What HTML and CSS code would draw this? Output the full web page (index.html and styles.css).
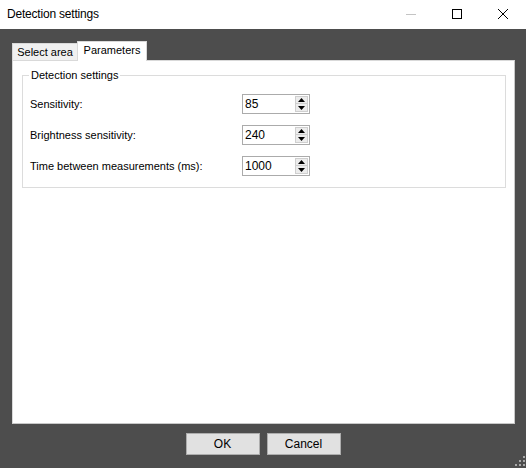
FILE: index.html
```html
<!DOCTYPE html>
<html>
<head>
<meta charset="utf-8">
<link rel="stylesheet" href="styles.css">
</head>
<body>
<div class="window">
  <div class="titlebar">
    <div class="title">Detection settings</div>
    <div class="caption-buttons">
      <div class="cap-btn"><svg width="12" height="12" viewBox="0 0 12 12"><line x1="1" y1="6.5" x2="11" y2="6.5" stroke="#c4c4c4" stroke-width="1"/></svg></div>
      <div class="cap-btn"><svg width="12" height="12" viewBox="0 0 12 12"><rect x="1.5" y="1.5" width="9" height="9" fill="none" stroke="#000" stroke-width="1"/></svg></div>
      <div class="cap-btn"><svg width="12" height="12" viewBox="0 0 12 12"><path d="M1 1 L11 11 M11 1 L1 11" stroke="#000" stroke-width="1"/></svg></div>
    </div>
  </div>
  <div class="client">
    <div class="tabstrip">
      <div class="tab">Select area</div>
      <div class="tab active">Parameters</div>
    </div>
    <div class="panel">
      <div class="group">
        <span class="legend">Detection settings</span>
        <div class="rows">
          <div class="label">Sensitivity:</div>
          <div class="spin"><span class="val">85</span><div class="spin-btns"><div class="sb"><svg width="7" height="4" viewBox="0 0 7 4"><path d="M3.5 0 L7 4 L0 4 Z" fill="#000"/></svg></div><div class="sb"><svg width="7" height="4" viewBox="0 0 7 4"><path d="M0 0 L7 0 L3.5 4 Z" fill="#000"/></svg></div></div></div>
          <div class="label">Brightness sensitivity:</div>
          <div class="spin"><span class="val">240</span><div class="spin-btns"><div class="sb"><svg width="7" height="4" viewBox="0 0 7 4"><path d="M3.5 0 L7 4 L0 4 Z" fill="#000"/></svg></div><div class="sb"><svg width="7" height="4" viewBox="0 0 7 4"><path d="M0 0 L7 0 L3.5 4 Z" fill="#000"/></svg></div></div></div>
          <div class="label">Time between measurements (ms):</div>
          <div class="spin"><span class="val">1000</span><div class="spin-btns"><div class="sb"><svg width="7" height="4" viewBox="0 0 7 4"><path d="M3.5 0 L7 4 L0 4 Z" fill="#000"/></svg></div><div class="sb"><svg width="7" height="4" viewBox="0 0 7 4"><path d="M0 0 L7 0 L3.5 4 Z" fill="#000"/></svg></div></div></div>
        </div>
      </div>
    </div>
    <div class="buttons">
      <div class="btn">OK</div>
      <div class="btn">Cancel</div>
    </div>
    <svg class="grip" width="12" height="12" viewBox="0 0 12 12">
      <g fill="#a8a8a8">
        <rect x="9" y="1" width="2" height="2"/>
        <rect x="5" y="5" width="2" height="2"/>
        <rect x="9" y="5" width="2" height="2"/>
        <rect x="1" y="9" width="2" height="2"/>
        <rect x="5" y="9" width="2" height="2"/>
        <rect x="9" y="9" width="2" height="2"/>
      </g>
    </svg>
  </div>
</div>
</body>
</html>
```
FILE: styles.css
```css
html, body {
  margin: 0;
  padding: 0;
}
body {
  width: 526px;
  height: 468px;
  overflow: hidden;
  font-family: "Liberation Sans", Arial, sans-serif;
  font-size: 11px;
  color: #000;
}
.window {
  width: 526px;
  height: 468px;
  display: flex;
  flex-direction: column;
}
.titlebar {
  height: 29px;
  background: #fff;
  display: flex;
  align-items: stretch;
  justify-content: space-between;
  flex: none;
}
.title {
  font-size: 12px;
  padding-left: 7px;
  line-height: 29px;
  letter-spacing: -0.2px;
}
.caption-buttons {
  display: flex;
}
.cap-btn {
  width: 46px;
  display: flex;
  align-items: center;
  justify-content: center;
  padding-bottom: 2px;
}
.client {
  flex: 1;
  background: #4d4d4d;
  padding: 12px 11px 0 12px;
  position: relative;
  display: flex;
  flex-direction: column;
}
.tabstrip {
  display: flex;
  align-items: flex-end;
  height: 19px;
}
.tab {
  box-sizing: border-box;
  width: 66px;
  height: 17px;
  line-height: 16px;
  padding: 0;
  white-space: nowrap;
  text-align: center;
  background: #f0f0f0;
  border: 1px solid #d9d9d9;
  border-bottom: none;
  font-size: 11px;
}
.tab.active {
  width: 70px;
  height: 20px;
  line-height: 17px;
  background: #fff;
  margin-bottom: -1px;
  position: relative;
  z-index: 1;
  margin-left: -1px;
}
.panel {
  background: #fff;
  border: 1px solid #d9d9d9;
  border-right-color: #c8c8c8;
  border-bottom-color: #c8c8c8;
  padding: 14px 8px 0 9px;
  box-sizing: border-box;
  height: 364px;
}
.group {
  position: relative;
  border: 1px solid #dcdcdc;
  padding: 18px 0 11px 7px;
}
.legend {
  position: absolute;
  top: -8px;
  left: 6px;
  padding: 0 2px;
  background: #fff;
  line-height: 14px;
}
.rows {
  display: grid;
  grid-template-columns: 212px 68px;
  row-gap: 11px;
  align-items: center;
}
.label {
  line-height: 14px;
}
.spin {
  height: 20px;
  box-sizing: border-box;
  border: 1px solid #ababab;
  display: flex;
  align-items: center;
  justify-content: space-between;
  padding: 0 1px 0 2px;
  font-size: 12px;
}
.spin-btns {
  display: flex;
  flex-direction: column;
  width: 13px;
}
.sb {
  height: 8px;
  background: #ececec;
  border: 1px solid #cfcfcf;
  box-sizing: border-box;
  display: flex;
  align-items: center;
  justify-content: center;
}
.sb + .sb {
  border-top: none;
}
.buttons {
  display: flex;
  justify-content: center;
  gap: 7px;
  margin-top: 9px;
  margin-left: -12px;
  margin-right: -11px;
}
.btn {
  width: 74px;
  height: 22px;
  box-sizing: border-box;
  background: #e1e1e1;
  border: 1px solid #adadad;
  text-align: center;
  line-height: 20px;
  font-size: 12px;
}
.grip {
  position: absolute;
  right: 0;
  bottom: 1px;
}
```
